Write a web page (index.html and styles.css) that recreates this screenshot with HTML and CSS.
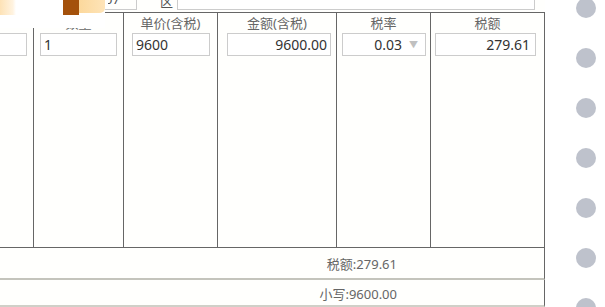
FILE: index.html
```html
<!DOCTYPE html>
<html lang="zh">
<head>
<meta charset="utf-8">
<link rel="stylesheet" href="styles.css">
</head>
<body>
<div class="page">
  <div class="invoice">
    <div class="toprow">
      <div class="field-a"><span class="fa-text">2007</span></div>
      <div class="label-q">区</div>
      <div class="field-b"></div>
    </div>
    <div class="grid">
      <div class="col c0">
        <div class="head"></div>
        <div class="box b0"></div>
      </div>
      <div class="col c1">
        <div class="head">数量</div>
        <div class="box b1">1</div>
      </div>
      <div class="col c2">
        <div class="head">单价(含税)</div>
        <div class="box b2">9600</div>
      </div>
      <div class="col c3">
        <div class="head">金额(含税)</div>
        <div class="box b3 right">9600.00</div>
      </div>
      <div class="col c4">
        <div class="head">税率</div>
        <div class="box b4 select"><span>0.03</span><span class="arrow">▼</span></div>
      </div>
      <div class="col c5">
        <div class="head">税额</div>
        <div class="box b5 right">279.61</div>
      </div>
    </div>
    <div class="sum s1"><span>税额:279.61</span></div>
    <div class="sum s2"><span>小写:9600.00</span></div>
    <div class="overlay">
      <div class="blob blob-l"></div>
      <div class="blob blob-d"></div>
      <div class="blob blob-o"></div>
    </div>
  </div>
  <div class="rail">
    <span class="dot"></span><span class="dot"></span><span class="dot"></span><span class="dot"></span>
    <span class="dot"></span><span class="dot"></span><span class="dot"></span>
  </div>
</div>
</body>
</html>
```
FILE: styles.css
```css
html, body {
  margin: 0;
  padding: 0;
  background: #ffffff;
}
body {
  width: 605px;
  height: 307px;
  overflow: hidden;
  font-family: "Noto Sans", "Noto Sans CJK SC", sans-serif;
  color: #333;
}
.page {
  display: flex;
  width: 605px;
  height: 307px;
}
.invoice {
  position: relative;
  width: 545px;
  flex: none;
  background: #fffffd;
}
.toprow {
  height: 12px;
  display: flex;
  align-items: flex-end;
  overflow: hidden;
  font-size: 13px;
  color: #555;
}
.field-a {
  width: 40px;
  margin-left: 97px;
  height: 24px;
  margin-bottom: 2px;
  border-right: 1px solid #ccc;
  border-bottom: 1px solid #ccc;
  box-sizing: border-box;
  display: flex;
  align-items: flex-end;
  justify-content: flex-end;
  padding-right: 16px;
  line-height: 1;
  padding-bottom: 3px;
  overflow: hidden;
}
.fa-text {
  display: block;
  width: 12px;
  overflow: hidden;
  direction: rtl;
}
.label-q {
  margin-left: 23px;
  width: 17px;
  line-height: 1;
  padding-bottom: 4px;
}
.field-b {
  width: 358px;
  height: 24px;
  margin-bottom: 2px;
  border: 1px solid #ccc;
  box-sizing: border-box;
  background: #fff;
}
.grid {
  display: grid;
  grid-template-columns: 34px 90px 94px 119px 94px 114px;
  border-top: 1px solid #666;
  border-bottom: 1px solid #666;
  height: 236px;
  box-sizing: border-box;
}
.col {
  border-right: 1px solid #666;
  display: flex;
  flex-direction: column;
  min-width: 0;
}
.head {
  height: 20px;
  line-height: 20px;
  text-align: center;
  font-size: 13px;
  color: #666;
  white-space: nowrap;
}
.box {
  margin-top: 0;
  height: 23px;
  box-sizing: border-box;
  border: 1px solid #ccc;
  background: #fff;
  font-size: 14px;
  line-height: 21px;
  padding: 0 3px;
  color: #333;
  white-space: nowrap;
}
.right { text-align: right; }
.b0 { width: 40px; margin-left: -13px; }
.b1 { width: 77px; margin-left: 6px; }
.b2 { width: 78px; margin-left: 8px; }
.b3 { width: 104px; margin-left: 9px; }
.b4 { width: 84px; margin-left: 5px; }
.b5 { width: 101px; margin-left: 4px; padding-right: 5px; }
.select {
  display: flex;
  justify-content: flex-end;
  align-items: center;
  gap: 7px;
  padding-right: 7px;
}
.arrow {
  font-size: 9px;
  color: #c0c0c0;
}
.sum {
  display: flex;
  justify-content: flex-end;
  align-items: center;
  padding-right: 147px;
  border-right: 1px solid #666;
  font-size: 13px;
  color: #666;
}
.s1 {
  height: 32px;
  border-bottom: 2px solid #c4c4bc;
  box-sizing: border-box;
}
.s2 {
  height: 27px;
  border-bottom: 2px solid #d0d0c8;
  box-sizing: border-box;
  padding-top: 2px;
}
.overlay {
  position: absolute;
  left: 0;
  top: 0;
  width: 105px;
  height: 28px;
  background: #ffffff;
}
.blob {
  position: absolute;
  top: 0;
}
.blob-l {
  left: 0;
  width: 16px;
  height: 15px;
  background: linear-gradient(90deg, #fde2b6, #fff3e0 80%, #ffffff);
}
.blob-d {
  left: 63px;
  width: 16px;
  height: 15px;
  background: #a4510b;
}
.blob-o {
  left: 79px;
  width: 26px;
  height: 13px;
  background: linear-gradient(90deg, #fcd89c, #fee4b8);
  border-bottom-right-radius: 5px;
}
.rail {
  flex: none;
  width: 60px;
  display: flex;
  flex-direction: column;
  align-items: flex-start;
  gap: 30px;
  margin-top: -2px;
  padding-left: 31px;
  box-sizing: border-box;
}
.dot {
  display: block;
  width: 20px;
  height: 20px;
  border-radius: 50%;
  background: #bec2cc;
  flex: none;
}
```
